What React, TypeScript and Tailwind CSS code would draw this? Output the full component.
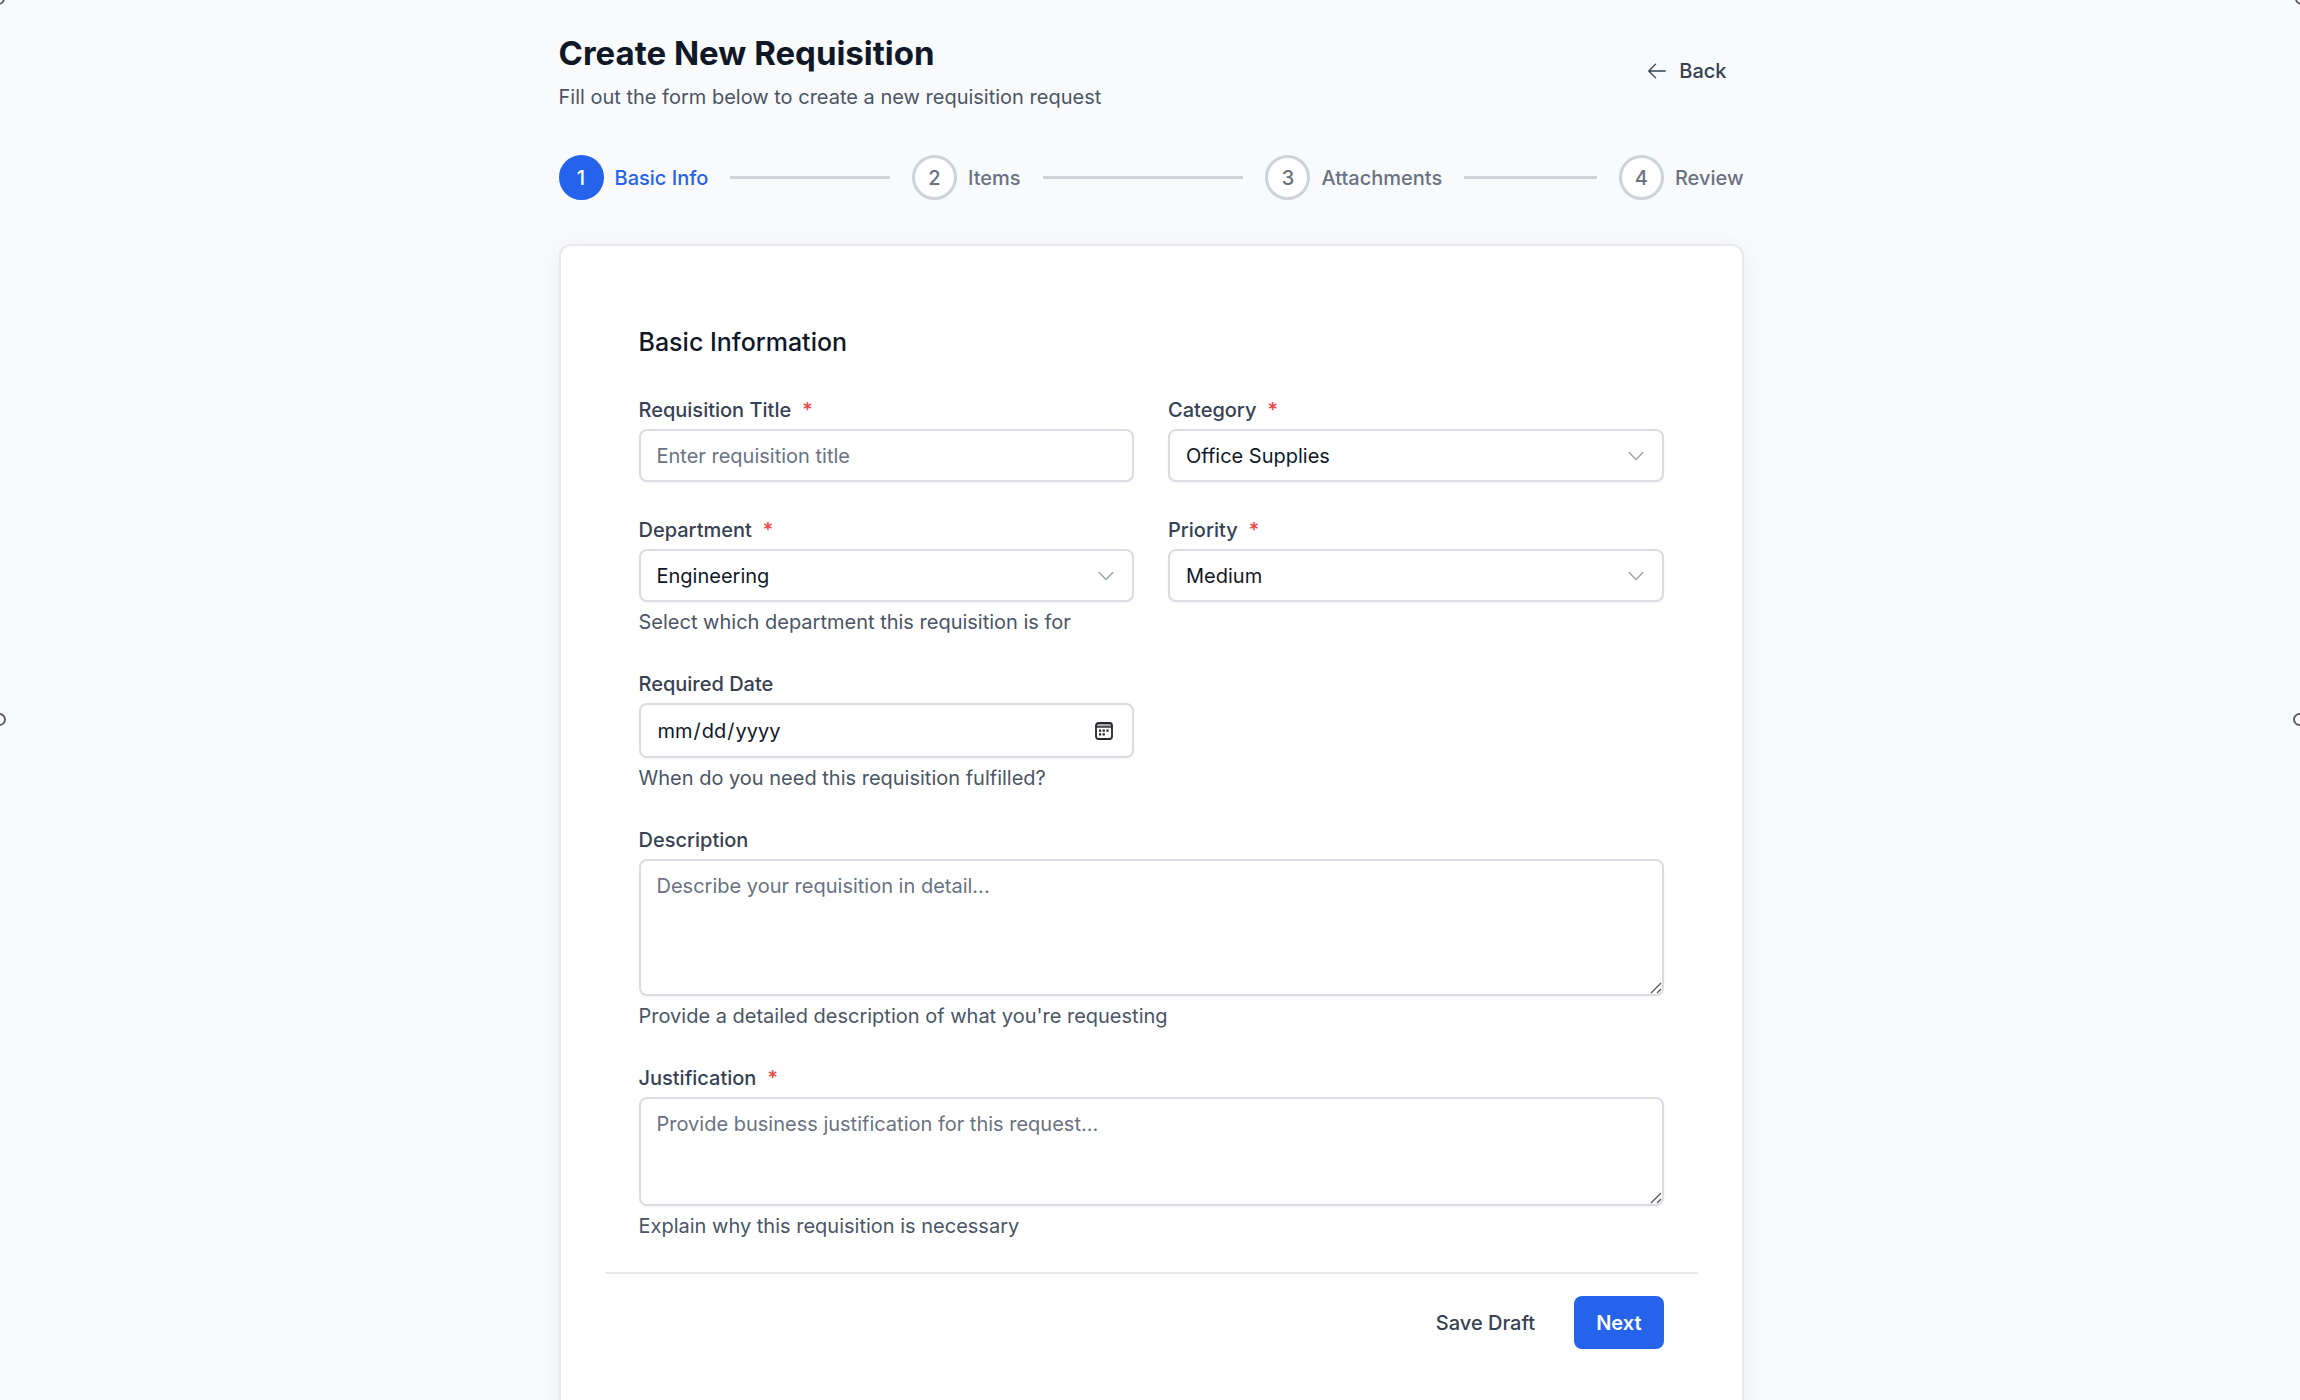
import React from "react";
import clsx from "clsx";

const steps = ["Basic Info", "Items", "Attachments", "Review"];

const control =
  "block w-full rounded-lg border-2 border-[#dadde3] bg-white px-4 text-xl/7 text-gray-900 shadow-xs placeholder:text-gray-500 focus:border-[#2563eb] focus:outline-none";

interface FieldProps {
  id: string;
  label: string;
  required?: boolean;
  help?: string;
  className?: string;
  children: React.ReactNode;
}

function Field({ id, label, required, help, className, children }: FieldProps) {
  return (
    <div className={className}>
      <label htmlFor={id} className="mb-[5px] flex gap-[11px] font-medium text-gray-700">
        {label}
        {required && <span className="text-[#ef4444]">*</span>}
      </label>
      {children}
      {help && <p className="mt-1.5 text-gray-600">{help}</p>}
    </div>
  );
}

function Select({ id, options }: { id: string; options: string[] }) {
  return (
    <div className="relative">
      <select id={id} className={clsx(control, "h-[53px] appearance-none pr-12")}>
        {options.map((o) => (
          <option key={o}>{o}</option>
        ))}
      </select>
      <svg
        viewBox="0 0 24 24"
        fill="none"
        stroke="currentColor"
        strokeWidth="1.5"
        strokeLinecap="round"
        strokeLinejoin="round"
        className="pointer-events-none absolute top-4 right-[17px] size-[22px] text-gray-400"
      >
        <path d="m19.5 8.25-7.5 7.5-7.5-7.5" />
      </svg>
    </div>
  );
}

function TextArea({ id, placeholder, className }: { id: string; placeholder: string; className: string }) {
  return (
    <div className="relative">
      <textarea id={id} placeholder={placeholder} className={clsx(control, "resize-none py-[11px]", className)} />
      <svg
        viewBox="0 0 12 12"
        stroke="#555"
        strokeWidth="1.3"
        className="pointer-events-none absolute right-0.5 bottom-0.5 size-3"
      >
        <path d="M1 11 11 1M7 11l4-4" />
      </svg>
    </div>
  );
}

// Selection handles sitting on the edges of the canvas
function Handle({ className }: { className: string }) {
  return <span className={clsx("absolute size-[13px] rounded-full border-2 border-[#5f5f69] bg-white", className)} />;
}

export default function App() {
  return (
    <div className="relative min-h-screen overflow-hidden bg-[#f9fafc] pl-0.5 font-['Inter',sans-serif] text-xl/7 text-gray-900">
      <Handle className="-top-2 -left-2" />
      <Handle className="-top-2 -right-2" />
      <Handle className="top-[713px] -left-[7px]" />
      <Handle className="top-[713px] -right-[6px]" />

      <div className="mx-auto max-w-[1185px] pt-[31px]">
        {/* Page header */}
        <header className="flex items-center justify-between">
          <div>
            <h1 className="text-[33px] leading-11 font-bold">Create New Requisition</h1>
            <p className="mt-2 text-gray-600">Fill out the form below to create a new requisition request</p>
          </div>
          <button type="button" className="flex items-center gap-[11px] px-[17px] font-medium text-gray-700">
            <svg
              viewBox="0 0 24 24"
              fill="none"
              stroke="currentColor"
              strokeWidth="1.5"
              strokeLinecap="round"
              strokeLinejoin="round"
              className="size-[22px]"
            >
              <path d="M10.5 19.5 3 12m0 0 7.5-7.5M3 12h18" />
            </svg>
            Back
          </button>
        </header>

        {/* Stepper */}
        <ol className="mt-11 flex items-center font-medium">
          {steps.map((step, i) => (
            <li key={step} className={clsx("flex items-center", i < steps.length - 1 && "flex-1")}>
              <span
                className={clsx(
                  "flex size-[45px] shrink-0 items-center justify-center rounded-full border-3",
                  i === 0 ? "border-[#2563eb] bg-[#2563eb] text-white" : "border-[#d0d2da] bg-white text-gray-500"
                )}
              >
                {i + 1}
              </span>
              <span className={clsx("ml-[11px]", i === 0 ? "text-[#2563eb]" : "text-gray-500")}>{step}</span>
              {i < steps.length - 1 && <span className="mx-[22px] h-[3px] flex-1 bg-[#d0d2da]" />}
            </li>
          ))}
        </ol>

        <form
          className="mt-11 rounded-xl border-2 border-[#e8e9ed] bg-white px-[44px] pt-[77px] pb-[77px] shadow-[0_5px_22px_rgba(0,0,0,0.06)]"
          onSubmit={(e) => e.preventDefault()}
        >
          <div className="px-[34px]">
            <h2 className="text-[25px] leading-[39px] font-medium">Basic Information</h2>

            <div className="mt-[34px] grid grid-cols-2 gap-[34px]">
              <Field id="title" label="Requisition Title" required>
                <input id="title" type="text" placeholder="Enter requisition title" className={clsx(control, "h-[53px]")} />
              </Field>
              <Field id="category" label="Category" required>
                <Select id="category" options={["Office Supplies", "Hardware", "Software", "Services"]} />
              </Field>
              <Field
                id="department"
                label="Department"
                required
                help="Select which department this requisition is for"
              >
                <Select id="department" options={["Engineering", "Finance", "Marketing", "Operations"]} />
              </Field>
              <Field id="priority" label="Priority" required>
                <Select id="priority" options={["Medium", "Low", "High", "Urgent"]} />
              </Field>
              <Field id="date" label="Required Date" help="When do you need this requisition fulfilled?">
                <div className="relative">
                  <input
                    id="date"
                    type="date"
                    className={clsx(control, "h-[55px] [&::-webkit-calendar-picker-indicator]:opacity-0")}
                  />
                  <svg
                    viewBox="0 0 18 18"
                    fill="none"
                    className="pointer-events-none absolute top-[19px] right-[21px] size-[18px] text-[#25252b]"
                  >
                    <path d="M1 1h16v4H1z" fill="currentColor" fillOpacity="0.4" />
                    <rect x="1" y="1" width="16" height="16" rx="2.5" stroke="currentColor" strokeWidth="1.8" />
                    <path d="M1 5h16" stroke="currentColor" strokeWidth="1.4" />
                    <path
                      d="M4 7.5h2.2v2.2H4zM7.6 7.5h2.2v2.2H7.6zM11.4 7.5h2.2v2.2h-2.2zM4 11.3h2.2v2.2H4zM7.6 11.3h2.2v2.2H7.6z"
                      fill="currentColor"
                    />
                  </svg>
                </div>
              </Field>
              <Field
                id="description"
                label="Description"
                help="Provide a detailed description of what you're requesting"
                className="col-span-2"
              >
                <TextArea id="description" placeholder="Describe your requisition in detail..." className="h-[137px]" />
              </Field>
              <Field
                id="justification"
                label="Justification"
                required
                help="Explain why this requisition is necessary"
                className="col-span-2"
              >
                <TextArea
                  id="justification"
                  placeholder="Provide business justification for this request..."
                  className="h-[109px]"
                />
              </Field>
            </div>
          </div>

          <div className="mt-8 flex items-center justify-end gap-[17px] border-t-2 border-[#e8e9ed] px-[34px] pt-[22px]">
            <button type="button" className="h-[53px] px-[22px] font-medium text-gray-700">
              Save Draft
            </button>
            <button type="submit" className="h-[53px] rounded-lg bg-[#2563eb] px-[22px] font-semibold text-white">
              Next
            </button>
          </div>
        </form>
      </div>
    </div>
  );
}
